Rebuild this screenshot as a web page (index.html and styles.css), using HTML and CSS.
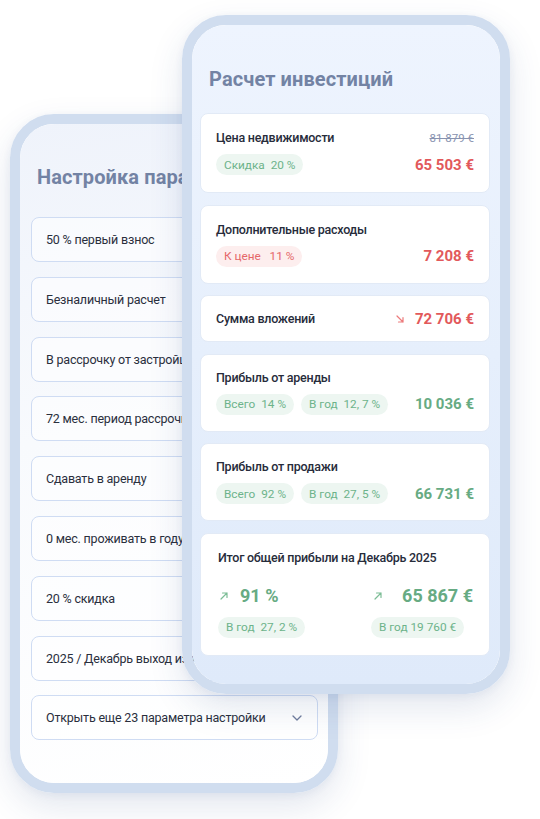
FILE: index.html
```html
<!DOCTYPE html>
<html lang="ru">
<head>
<meta charset="utf-8">
<link rel="stylesheet" href="styles.css">
</head>
<body>
<div class="stage">
  <div class="phone phone-back">
    <div class="screen screen-back">
      <h2 class="title">Настройка параметров</h2>
      <div class="rows">
        <div class="row">50 % первый взнос</div>
        <div class="row">Безналичный расчет</div>
        <div class="row">В рассрочку от застройщика</div>
        <div class="row">72 мес. период рассрочки</div>
        <div class="row">Сдавать в аренду</div>
        <div class="row">0 мес. проживать в году</div>
        <div class="row">20 % скидка</div>
        <div class="row">2025 / Декабрь выход из инвестиции</div>
        <div class="row row-more">
          <span>Открыть еще 23 параметра настройки</span>
          <svg class="chev" width="10" height="6" viewBox="0 0 10 6"><path d="M1 1 L5 5 L9 1" fill="none" stroke="#6f7c9c" stroke-width="1.3" stroke-linecap="round" stroke-linejoin="round"/></svg>
        </div>
      </div>
    </div>
  </div>

  <div class="phone phone-front">
    <div class="screen screen-front">
      <h2 class="title title-front">Расчет инвестиций</h2>
      <div class="cards">
        <div class="card c80">
          <div class="line">
            <span class="label">Цена недвижимости</span>
            <span class="old">81 879 €</span>
          </div>
          <div class="line line2">
            <span class="badge green">Скидка&nbsp; 20 %</span>
            <span class="amount red">65 503 €</span>
          </div>
        </div>
        <div class="card c79">
          <div class="line">
            <span class="label">Дополнительные расходы</span>
          </div>
          <div class="line line2">
            <span class="badge redb">К цене&nbsp;&nbsp; 11 %</span>
            <span class="amount red">7 208 €</span>
          </div>
        </div>
        <div class="card card-single">
          <span class="label">Сумма вложений</span>
          <span class="amt-group">
            <svg class="arrow" width="8" height="8" viewBox="0 0 8 8"><path d="M1 1 L7 7 M7 2.5 L7 7 L2.5 7" fill="none" stroke="#ec7a7b" stroke-width="1.2" stroke-linecap="round" stroke-linejoin="round"/></svg>
            <span class="amount red">72 706 €</span>
          </span>
        </div>
        <div class="card c78">
          <div class="line">
            <span class="label">Прибыль от аренды</span>
          </div>
          <div class="line line2">
            <span class="badges">
              <span class="badge green">Всего&nbsp; 14 %</span>
              <span class="badge green">В год&nbsp; 12, 7 %</span>
            </span>
            <span class="amount green-t">10 036 €</span>
          </div>
        </div>
        <div class="card c78">
          <div class="line">
            <span class="label">Прибыль от продажи</span>
          </div>
          <div class="line line2">
            <span class="badges">
              <span class="badge green">Всего&nbsp; 92 %</span>
              <span class="badge green">В год&nbsp; 27, 5 %</span>
            </span>
            <span class="amount green-t">66 731 €</span>
          </div>
        </div>
        <div class="card card-total">
          <div class="label">Итог общей прибыли на Декабрь 2025</div>
          <div class="totals">
            <div class="tcol">
              <div class="big-line">
                <svg class="arrow" width="8" height="8" viewBox="0 0 8 8"><path d="M1 7 L7 1 M2.5 1 L7 1 L7 5.5" fill="none" stroke="#7cbd96" stroke-width="1.2" stroke-linecap="round" stroke-linejoin="round"/></svg>
                <span class="big">91 %</span>
              </div>
              <span class="badge green">В год&nbsp; 27, 2 %</span>
            </div>
            <div class="tcol tcol-right">
              <div class="big-line big-line-right">
                <svg class="arrow" width="8" height="8" viewBox="0 0 8 8"><path d="M1 7 L7 1 M2.5 1 L7 1 L7 5.5" fill="none" stroke="#7cbd96" stroke-width="1.2" stroke-linecap="round" stroke-linejoin="round"/></svg>
                <span class="big">65 867 €</span>
              </div>
              <span class="badge green">В год 19 760 €</span>
            </div>
          </div>
        </div>
      </div>
    </div>
  </div>
</div>
</body>
</html>
```

FILE: styles.css
```css
* { box-sizing: border-box; margin: 0; padding: 0; }
html, body { background: #ffffff; }
body {
  font-family: Roboto, "Noto Sans", sans-serif;
  color: #272c3b;
  width: 540px;
  height: 819px;
  overflow: hidden;
}
.stage {
  display: grid;
  width: 540px;
  height: 819px;
}
.phone {
  grid-area: 1 / 1;
  width: 328px;
  height: 679px;
  border: 10px solid #d0ddef;
  border-radius: 44px;
  box-shadow: 0 14px 34px rgba(40, 70, 130, 0.13), 0 2px 8px rgba(40, 70, 130, 0.06);
  overflow: hidden;
}
.phone-back {
  margin: 114px 0 0 10px;
}
.phone-front {
  margin: 15px 0 0 182px;
}
.screen {
  width: 100%;
  height: 100%;
  border-radius: 34px;
}
.screen-back {
  background: linear-gradient(170deg, #eff3fb 0%, #f8fafd 45%, #ffffff 100%);
  padding: 41px 10px 0 11px;
}
.title {
  font-size: 20px;
  line-height: 24px;
  font-weight: 700;
  color: #7383a4;
  white-space: nowrap;
  padding-left: 6px;
  letter-spacing: 0.1px;
}
.rows {
  margin-top: 28px;
  display: flex;
  flex-direction: column;
  gap: 14.8px;
}
.row {
  height: 45px;
  border: 1.5px solid #cfdcf3;
  border-radius: 8px;
  background: rgba(255, 255, 255, 0.55);
  display: flex;
  align-items: center;
  justify-content: space-between;
  padding: 0 15px 0 14px;
  font-size: 12.5px;
  letter-spacing: -0.2px;
  color: #2a2f3d;
  white-space: nowrap;
  overflow: hidden;
}
.chev { flex: none; }

.screen-front {
  background: linear-gradient(180deg, #eef4fe 0%, #e6effc 50%, #dfeafa 100%);
  padding: 42px 10px 0 8px;
}
.title-front {
  padding-left: 9px;
}
.cards {
  margin-top: 22px;
  display: flex;
  flex-direction: column;
  gap: 11.6px;
}
.card {
  background: #ffffff;
  border: 1px solid #e2eaf6;
  border-radius: 8px;
  padding: 16px 15px 0 15px;
}
.c80 { height: 80px; }
.c79 { height: 79px; }
.c78 { height: 78px; padding-top: 15px; }
.line {
  display: flex;
  align-items: center;
  justify-content: space-between;
  height: 16px;
}
.line2 {
  margin-top: 8px;
  height: 21px;
}
.label {
  font-size: 12.5px;
  font-weight: 500;
  letter-spacing: -0.25px;
  color: #272c3b;
  line-height: 16px;
  white-space: nowrap;
}
.old {
  font-size: 11.5px;
  color: #8893b0;
  text-decoration: line-through;
  text-decoration-color: #8893b0;
}
.badges {
  display: flex;
  gap: 7px;
}
.badge {
  display: inline-flex;
  align-items: center;
  height: 21px;
  border-radius: 11px;
  padding: 0 8px;
  font-size: 11.8px;
  white-space: pre;
}
.badge.green {
  background: #edf6f1;
  color: #6cb38a;
}
.badge.redb {
  background: #fdeeee;
  color: #e56769;
}
.amount {
  font-size: 15px;
  font-weight: 700;
  line-height: 20px;
}
.amount.red { color: #e2595b; }
.amount.green-t { color: #67ab83; }
.card-single {
  height: 47px;
  padding-top: 0;
  display: flex;
  align-items: center;
  justify-content: space-between;
}
.amt-group {
  display: flex;
  align-items: center;
  gap: 11px;
}
.arrow { flex: none; display: block; }
.card-total {
  height: 123px;
  padding: 16px 16px 0 17px;
}
.card-total .label {
  line-height: 16px;
}
.totals {
  margin-top: 19px;
  display: flex;
  justify-content: space-between;
}
.tcol {
  display: flex;
  flex-direction: column;
  align-items: flex-start;
  gap: 10px;
}
.tcol-right {
  width: 102px;
}
.big-line {
  display: flex;
  align-items: center;
  gap: 12px;
  height: 22px;
  padding-left: 2px;
}
.big-line-right {
  width: 100%;
  justify-content: space-between;
  padding-left: 3px;
}
.big {
  font-size: 18px;
  font-weight: 700;
  color: #67ab83;
  line-height: 22px;
}
```
